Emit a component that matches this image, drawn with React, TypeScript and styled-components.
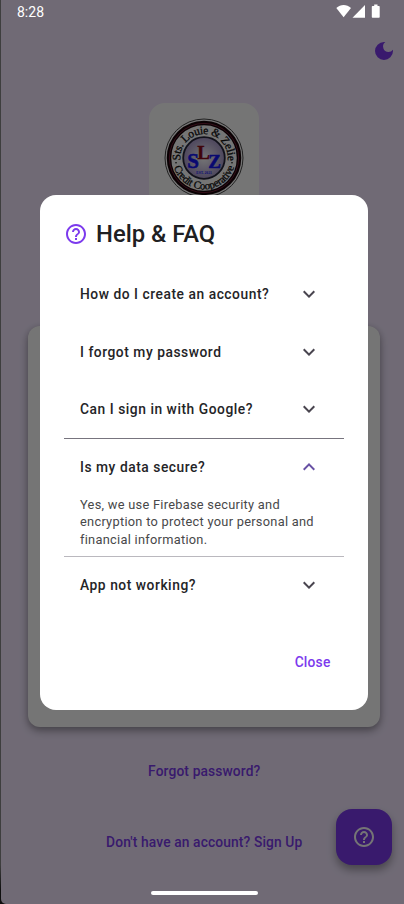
import React, { useState } from "react";
import styled, { createGlobalStyle } from "styled-components";

const Global = createGlobalStyle`
  * { box-sizing: border-box; }
  body { margin: 0; background: #000; font-family: Roboto, sans-serif; }
  button { font-family: inherit; border: 0; background: none; padding: 0; cursor: pointer; }
`;

const purple = "#7c3aed";

const Device = styled.div`
  position: relative;
  width: 404px;
  height: 904px;
  padding-left: 1px;
  overflow: hidden;
  background: linear-gradient(#888 0 865px, #222 890px);
`;

const Screen = styled.main`
  display: flex;
  flex-direction: column;
  align-items: center;
  width: 403px;
  height: 904px;
  padding: 23px 0 0 2px;
  background: #f3e8ff;
  border-bottom-left-radius: 5px;
  overflow: hidden;
`;

const TopBar = styled.header`
  display: flex;
  justify-content: flex-end;
  align-items: center;
  width: 100%;
  height: 56px;
  padding-right: 8px;
`;

const LogoCard = styled.div`
  display: flex;
  justify-content: center;
  align-items: center;
  width: 110px;
  height: 110px;
  margin-top: 24px;
  border-radius: 16px;
  background: #fff;
`;

const FormCard = styled.section`
  width: 352px;
  height: 401px;
  margin-top: 113px;
  border-radius: 12px;
  background: #fff;
  box-shadow: 0 4px 8px rgba(0, 0, 0, 0.32), 0 1px 6px rgba(0, 0, 0, 0.12);
`;

const LinkButton = styled.button<{ $top: number }>`
  height: 20px;
  margin-top: ${(p) => p.$top}px;
  padding-left: 1.5px;
  color: ${purple};
  font-size: 13.8px;
  font-weight: 500;
  line-height: 20px;
  letter-spacing: 0.12px;
`;

const Fab = styled.button`
  position: absolute;
  right: 12px;
  bottom: 39px;
  display: flex;
  justify-content: center;
  align-items: center;
  width: 56px;
  height: 56px;
  border-radius: 16px;
  background: ${purple};
  color: #fff;
  box-shadow: 0 5px 8px rgba(0, 0, 0, 0.35);
`;

const Scrim = styled.div`
  position: absolute;
  inset: 0;
  display: flex;
  justify-content: center;
  align-items: flex-start;
  padding: 195px 0 0 4px;
  background: rgba(0, 0, 0, 0.54);
`;

const StatusBar = styled.div`
  position: absolute;
  inset: 0 0 auto 0;
  display: flex;
  justify-content: space-between;
  height: 23px;
  padding: 4px 22px 0 17px;
  color: #fff;
  font-size: 14px;
  line-height: 16px;
`;

const HomeIndicator = styled.div`
  position: absolute;
  left: 151px;
  bottom: 9px;
  width: 107px;
  height: 4px;
  border-radius: 2px;
  background: #fff;
`;

const Dialog = styled.div`
  display: flex;
  flex-direction: column;
  width: 328px;
  height: 514.5px;
  padding: 23px 24px;
  border-radius: 16px;
  background: #fff;
`;

const DialogTitle = styled.h1`
  display: flex;
  align-items: center;
  gap: 8px;
  height: 32px;
  margin: 0 0 15.5px;
  color: #202022;
  font-size: 23.8px;
  font-weight: 500;
  line-height: 32px;
  svg { color: ${purple}; }
`;

const FaqItem = styled.section<{ $open: boolean }>`
  border-top: 1px solid ${(p) => (p.$open ? "#77747e" : "transparent")};
  border-bottom: 1px solid ${(p) => (p.$open ? "#bab8be" : "transparent")};
  margin-bottom: -0.5px;
`;

const FaqHeader = styled.button<{ $open: boolean }>`
  display: flex;
  justify-content: space-between;
  align-items: center;
  width: 100%;
  height: 56px;
  padding: 0 23.5px 1px 16px;
  color: #242427;
  font-size: 13.8px;
  font-weight: 500;
  letter-spacing: 0.54px;
  text-align: left;
  svg { color: ${(p) => (p.$open ? "#6750a4" : "#49454f")}; }
`;

const FaqAnswer = styled.p`
  margin: 0;
  padding: 0.5px 16px 7.5px;
  color: #48484a;
  font-size: 12.8px;
  line-height: 17.8px;
  letter-spacing: 0.28px;
`;

const Actions = styled.footer`
  display: flex;
  justify-content: flex-end;
  margin-top: auto;
  padding: 0 13.5px 14.5px 0;
`;

const CloseButton = styled.button`
  color: ${purple};
  font-size: 13.8px;
  font-weight: 500;
  line-height: 20px;
  letter-spacing: 0.2px;
`;

const HelpIcon = ({ size = 24 }: { size?: number }) => (
  <svg width={size} height={size} viewBox="0 0 24 24" fill="currentColor">
    <path d="M11 18h2v-2h-2v2zm1-16C6.48 2 2 6.48 2 12s4.480 10 10 10 10-4.480 10-10S17.520 2 12 2zm0 18c-4.410 0-8-3.590-8-8s3.590-8 8-8 8 3.590 8 8-3.590 8-8 8zm0-14c-2.210 0-4 1.790-4 4h2c0-1.100.9-2 2-2s2 .9 2 2c0 2-3 1.750-3 5h2c0-2.250 3-2.500 3-5 0-2.210-1.790-4-4-4z" />
  </svg>
);

const Chevron = ({ up }: { up: boolean }) => (
  <svg width="24" height="24" viewBox="0 0 24 24" fill="currentColor">
    {up ? (
      <path d="M12 8l-6 6 1.410 1.410L12 10.830l4.590 4.580L18 14z" />
    ) : (
      <path d="M16.590 8.590 12 13.170 7.410 8.590 6 10l6 6 6-6z" />
    )}
  </svg>
);

const MoonIcon = () => (
  <svg width="24" height="24" viewBox="0 0 24 24" fill={purple}>
    <path d="M12 3a9 9 0 1 0 9 9c0-.46-.04-.92-.1-1.360a5.389 5.389 0 0 1-4.400 2.260 5.403 5.403 0 0 1-3.140-9.800C12.920 3.040 12.460 3 12 3z" />
  </svg>
);

const StatusIcons = () => (
  <svg width="46" height="16" viewBox="0 0 46 16" fill="#fff">
    <path d="M.3 4C4.600.1 10.700.1 15 4L7.600 13.300z" />
    <path d="M29 1v12.800H16.500z" />
    <path d="M38.200 .6h3.300v1.400h1.500q.7 0 .7.7v10.400q0 .7-.7.7h-6.500q-.7 0-.7-.7V2.700q0-.7.7-.7h1.700z" />
  </svg>
);

const Logo = () => (
  <svg width="82" height="82" viewBox="-41 -41 82 82">
    <defs>
      <path id="arcTop" d="M-23.200 5.200A23.800 23.800 0 1 1 23.200 5.200" />
      <path id="arcBottom" d="M-31.400 0A31.400 31.400 0 0 0 31.400 0" />
      <radialGradient id="core">
        <stop offset="0" stopColor="#fff" />
        <stop offset="1" stopColor="#a99acb" />
      </radialGradient>
    </defs>
    <circle r="39" fill="#fff" stroke="#333" strokeWidth="0.9" />
    <circle r="35" fill="#fff" stroke="#160408" strokeWidth="4.500" />
    <circle r="34.600" fill="none" stroke="#742038" strokeWidth="1" />
    <circle r="20.800" fill="url(#core)" stroke="#28283c" strokeWidth="1.800" />
    <g fontFamily="Liberation Serif, serif" fill="#111" stroke="#111" strokeWidth="0.300">
      <text fontSize="11.500" textAnchor="middle" letterSpacing="-0.300">
        <textPath href="#arcTop" startOffset="50%">Sts. Louie &amp; Zelie</textPath>
      </text>
      <text fontSize="10.800" textAnchor="middle" letterSpacing="-0.150">
        <textPath href="#arcBottom" startOffset="50%">Credit Cooperative</textPath>
      </text>
    </g>
    <circle cx="-28" cy="4.800" r="0.8" />
    <circle cx="28" cy="4.800" r="0.8" />
    <g fontFamily="Liberation Serif, serif" fontWeight="700" textAnchor="middle">
      <text x="-11" y="9.500" fontSize="21" fill="#1414f5" stroke="#1414f5" strokeWidth="0.600">S</text>
      <text x="10.500" y="9.500" fontSize="19" fill="#1414f5" stroke="#1414f5" strokeWidth="0.600">Z</text>
      <text x="-0.500" y="0.500" fontSize="19" fill="#8c0c18" stroke="#8c0c18" strokeWidth="0.400">L</text>
      <text x="0" y="15.500" fontSize="3.600" fill="#1414f5">EST. 2021</text>
    </g>
  </svg>
);

const faqs = [
  { q: "How do I create an account?", a: "" },
  { q: "I forgot my password", a: "" },
  { q: "Can I sign in with Google?", a: "" },
  {
    q: "Is my data secure?",
    a: "Yes, we use Firebase security and encryption to protect your personal and financial information.",
  },
  { q: "App not working?", a: "" },
];

export default function App() {
  const [open, setOpen] = useState(3);
  return (
    <Device>
      <Global />
      <Screen>
        <TopBar>
          <MoonIcon />
        </TopBar>
        <LogoCard>
          <Logo />
        </LogoCard>
        <FormCard />
        <LinkButton $top={34}>Forgot password?</LinkButton>
        <LinkButton $top={51}>Don't have an account? Sign Up</LinkButton>
        <Fab aria-label="Help">
          <HelpIcon />
        </Fab>
      </Screen>
      <Scrim>
        <Dialog role="dialog">
          <DialogTitle>
            <HelpIcon />
            Help &amp; FAQ
          </DialogTitle>
          {faqs.map((f, i) => (
            <FaqItem key={f.q} $open={open === i}>
              <FaqHeader $open={open === i} onClick={() => setOpen(open === i ? -1 : i)}>
                {f.q}
                <Chevron up={open === i} />
              </FaqHeader>
              {open === i && <FaqAnswer>{f.a}</FaqAnswer>}
            </FaqItem>
          ))}
          <Actions>
            <CloseButton>Close</CloseButton>
          </Actions>
        </Dialog>
      </Scrim>
      <StatusBar>
        <span>8:28</span>
        <StatusIcons />
      </StatusBar>
      <HomeIndicator />
    </Device>
  );
}
